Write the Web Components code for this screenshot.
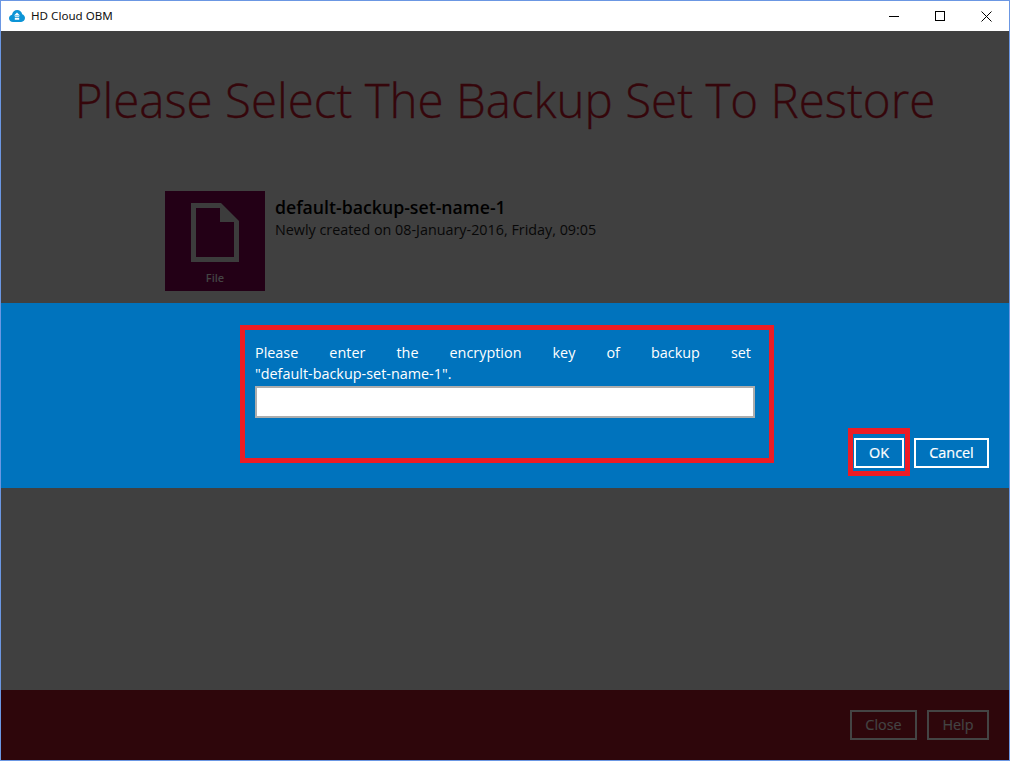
<!DOCTYPE html>
<html>
<head>
<meta charset="utf-8">
<style>
    html, body { margin: 0; padding: 0; height: 100%; overflow: hidden; }
    body { font-family: "Open Sans", "Liberation Sans", sans-serif; }
</style>
</head>
<body>
<obm-window>
    <obm-titlebar slot="titlebar">HD Cloud OBM</obm-titlebar>
    <obm-heading>Please Select The Backup Set To Restore</obm-heading>
    <obm-backup-set name="default-backup-set-name-1" created="Newly created on 08-January-2016, Friday, 09:05"></obm-backup-set>
    <obm-key-dialog slot="dialog" set-name="default-backup-set-name-1"></obm-key-dialog>
    <obm-footer slot="footer">
        <obm-button dim style="width:67px">Close</obm-button>
        <obm-button dim style="width:62px">Help</obm-button>
    </obm-footer>
</obm-window>

<script>
class ObmWindow extends HTMLElement {
    constructor() {
        super();
        this.attachShadow({ mode: 'open' });
        this.shadowRoot.innerHTML = `
            <style>
                :host {
                    display: flex;
                    flex-direction: column;
                    box-sizing: border-box;
                    width: 1010px;
                    height: 761px;
                    border: 1px solid #6b97e3;
                    background: #404040;
                }
                .top { height: 272px; flex: none; }
                .dialog { height: 185px; flex: none; }
                .gap { flex: 1; }
            </style>
            <slot name="titlebar"></slot>
            <div class="top"><slot></slot></div>
            <div class="dialog"><slot name="dialog"></slot></div>
            <div class="gap"></div>
            <slot name="footer"></slot>
        `;
    }
}

class ObmTitlebar extends HTMLElement {
    constructor() {
        super();
        this.attachShadow({ mode: 'open' });
        this.shadowRoot.innerHTML = `
            <style>
                :host {
                    display: flex;
                    align-items: center;
                    flex: none;
                    height: 30px;
                    background: #fff;
                    color: #111;
                    font: 11.6px "Noto Sans", "Open Sans", sans-serif;
                }
                .logo { margin: 0 6px 0 8px; display: block; }
                .title { flex: 1; padding-bottom: 1px; }
                .ctl { width: 46px; height: 30px; display: flex; align-items: center; justify-content: center; }
                .ctl svg { display: block; }
            </style>
            <svg class="logo" width="16" height="12" viewBox="0 0 16 12">
                <path fill="#0c94d6" d="M4 12C1.800 12 0 10.400 0 8.300 0 6.500 1.300 5.100 3 4.700 3.500 2 5.600 0 8.200 0c2.500 0 4.500 1.800 5 4.200 1.600.4 2.800 2 2.800 3.900 0 2.200-1.700 3.900-3.800 3.900z"/>
                <path fill="#fff" d="M8 2.500 11 5.500H5zM5.800 6.300H10.200V7.300H5.800zM5.800 8.100H10.200V9.700H5.800z"/>
            </svg>
            <span class="title"><slot></slot></span>
            <div class="ctl"><svg width="11" height="11" viewBox="0 0 11 11"><path d="M0 5.500H10" stroke="#000" fill="none"/></svg></div>
            <div class="ctl"><svg width="11" height="11" viewBox="0 0 11 11"><rect x=".5" y=".5" width="9" height="9" stroke="#000" fill="none"/></svg></div>
            <div class="ctl"><svg width="11" height="11" viewBox="0 0 11 11"><path d="M.5 .5 10.500 10.500M10.500 .5 .5 10.500" stroke="#000" fill="none"/></svg></div>
        `;
    }
}

class ObmHeading extends HTMLElement {
    constructor() {
        super();
        this.attachShadow({ mode: 'open' });
        this.shadowRoot.innerHTML = `
            <style>
                :host {
                    display: block;
                    padding-top: 36px;
                    text-align: center;
                    color: #35060b;
                    font: 300 47.500px/66px "Open Sans", sans-serif;
                    -webkit-text-stroke: 0.3px currentColor;
                    white-space: nowrap;
                }
            </style>
            <slot></slot>
        `;
    }
}

class ObmBackupSet extends HTMLElement {
    constructor() {
        super();
        this.attachShadow({ mode: 'open' });
    }

    connectedCallback() {
        const name = this.getAttribute('name');
        const created = this.getAttribute('created');
        this.shadowRoot.innerHTML = `
            <style>
                :host {
                    display: flex;
                    gap: 10px;
                    margin: 58px 0 0 164px;
                    font-family: "Open Sans", sans-serif;
                }
                .tile {
                    width: 100px;
                    height: 100px;
                    background: #230016;
                    display: flex;
                    flex-direction: column;
                    align-items: center;
                    color: #444;
                    font-size: 11px;
                    font-weight: 600;
                }
                .tile svg { margin-top: 12px; display: block; }
                .tile span { margin-top: 8px; line-height: 15px; }
                .name { color: #000; font-size: 17.700px; font-weight: 600; line-height: 22px; margin-top: 5px; }
                .sub { color: #080808; font-size: 14.350px; line-height: 20px; margin-top: 2px; }
            </style>
            <div class="tile">
                <svg width="48" height="59" viewBox="0 0 48 59">
                    <path fill="#3c3c3c" fill-rule="evenodd" d="M0 0H30L48 18V59H0ZM5 5V54H43V19H29V5Z"/>
                </svg>
                <span>File</span>
            </div>
            <div>
                <div class="name">${name}</div>
                <div class="sub">${created}</div>
            </div>
        `;
    }
}

class ObmButton extends HTMLElement {
    constructor() {
        super();
        this.attachShadow({ mode: 'open' });
        this.shadowRoot.innerHTML = `
            <style>
                :host {
                    display: inline-flex;
                    box-sizing: border-box;
                    height: 30px;
                    padding-bottom: 2px;
                    align-items: center;
                    justify-content: center;
                    border: 2px solid #fff;
                    color: #fff;
                    font: 14.400px "Open Sans", sans-serif;
                    -webkit-text-stroke: 0.2px currentColor;
                }
                :host([dim]) { border-color: #444; color: #444; }
            </style>
            <slot></slot>
        `;
    }
}

class ObmKeyDialog extends HTMLElement {
    constructor() {
        super();
        this.attachShadow({ mode: 'open' });
    }

    connectedCallback() {
        const setName = this.getAttribute('set-name');
        this.shadowRoot.innerHTML = `
            <style>
                :host {
                    display: block;
                    position: relative;
                    height: 185px;
                    background: #0073bd;
                    color: #fff;
                    font: 14.400px/21px "Open Sans", sans-serif;
                }
                .form { width: 500px; padding: 39px 0 0 254px; }
                .msg { text-align: justify; width: 496px; }
                .msg span { white-space: nowrap; }
                .input {
                    box-sizing: border-box;
                    width: 500px;
                    height: 32px;
                    margin-top: 2px;
                    background: #fff;
                    border: 2px solid #adadad;
                }
                .actions {
                    position: absolute;
                    right: 20px;
                    top: 135px;
                    display: flex;
                    gap: 10px;
                }
                .mark { position: absolute; box-sizing: border-box; border: 5px solid #ed1c24; pointer-events: none; }
                .mark-form { left: 239px; top: 22px; width: 534px; height: 138px; }
                .mark-ok { left: 847px; top: 125px; width: 62px; height: 48px; border-top-width: 6px; }
            </style>
            <div class="form">
                <div class="msg">Please enter the encryption key of backup set <span>"${setName}".</span></div>
                <div class="input"></div>
            </div>
            <div class="actions">
                <obm-button style="width:50px">OK</obm-button>
                <obm-button style="width:75px">Cancel</obm-button>
            </div>
            <div class="mark mark-form"></div>
            <div class="mark mark-ok"></div>
        `;
    }
}

class ObmFooter extends HTMLElement {
    constructor() {
        super();
        this.attachShadow({ mode: 'open' });
        this.shadowRoot.innerHTML = `
            <style>
                :host {
                    display: flex;
                    flex: none;
                    box-sizing: border-box;
                    height: 70px;
                    padding: 20px 20px 0 0;
                    justify-content: flex-end;
                    gap: 10px;
                    background: #2e060b;
                }
            </style>
            <slot></slot>
        `;
    }
}

customElements.define('obm-window', ObmWindow);
customElements.define('obm-titlebar', ObmTitlebar);
customElements.define('obm-heading', ObmHeading);
customElements.define('obm-backup-set', ObmBackupSet);
customElements.define('obm-button', ObmButton);
customElements.define('obm-key-dialog', ObmKeyDialog);
customElements.define('obm-footer', ObmFooter);
</script>
</body>
</html>
